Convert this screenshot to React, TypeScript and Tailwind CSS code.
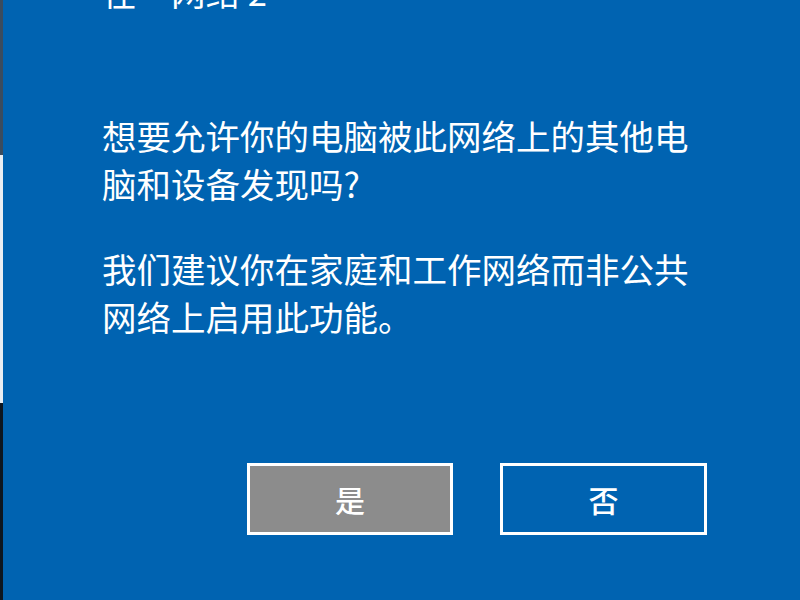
export default function App() {
  return (
    <div className="flex h-[600px] w-[800px] overflow-hidden bg-[#0063b1] font-['Noto_Sans_CJK_SC','Noto_Sans',sans-serif] text-white">
      {/* 左侧窗口边缘 */}
      <div className="flex w-[3px] shrink-0 flex-col">
        <div className="h-[155px] bg-[#3b4c5e]" />
        <div className="h-[248px] bg-[#e9eef3]" />
        <div className="flex-1 bg-[#0d1620]" />
      </div>

      <div className="flex flex-1 flex-col pl-[99px] pr-[93px]">
        <h1 className="-mt-[33px] text-[34.5px] leading-[48px] whitespace-nowrap">在一网络 2</h1>

        <p className="mt-[96px] w-[600px] text-[34.5px] leading-[48px]">
          想要允许你的电脑被此网络上的其他电脑和设备发现吗?
        </p>
        <p className="mt-[37px] w-[600px] text-[34.5px] leading-[48px]">
          我们建议你在家庭和工作网络而非公共网络上启用此功能。
        </p>

        <div className="mt-[123px] flex justify-end gap-[47px]">
          <button
            type="button"
            className="flex h-[72px] w-[206px] items-center justify-center border-[3px] border-white bg-[#8c8c8c] text-[30px] font-medium text-white"
          >
            是
          </button>
          <button
            type="button"
            className="flex h-[72px] w-[207px] items-center justify-center border-[3px] border-white bg-[#0063b1] text-[30px] font-medium text-white"
          >
            否
          </button>
        </div>
      </div>
    </div>
  )
}
